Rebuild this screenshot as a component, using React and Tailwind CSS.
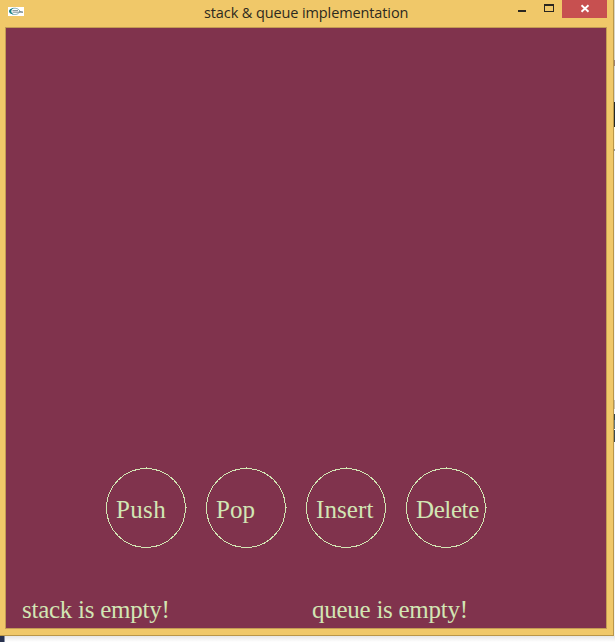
const circles = [
  { label: 'Push', spacing: 'tracking-[0.35px]', dot: true },
  { label: 'Pop', spacing: 'tracking-[0.1px]', dot: true },
  { label: 'Insert', spacing: 'tracking-[0.1px]', dot: false },
  { label: 'Delete', spacing: 'tracking-[-0.4px]', dot: true },
];

function AppIcon() {
  return (
    <svg width="16" height="9" viewBox="0 0 16 9" className="mt-[7px] ml-2 block shrink-0">
      <rect width="16" height="9" fill="#fff" />
      <path d="M4 1.600C7 .8 10.500 1.300 12 4.300 10.500 7.600 7 8 4 7" fill="none" stroke="#6fa3ac" strokeWidth=".9" />
      <path d="M5.500 1.200C2.300 1.300 1 2.800 1 4.300s1.200 2.800 4.500 3C3.900 6.400 3.300 5.500 3.300 4.300S3.900 2.100 5.500 1.200Z" fill="#168085" />
      <path d="M4.500 3.600h5.500M4.500 5.200h10.500M11 4.200l4 1" stroke="#71868f" strokeWidth=".9" fill="none" />
    </svg>
  );
}

function CircleButton({ label, spacing, dot }) {
  return (
    <div className="grid h-[82px] w-[82px] shrink-0">
      <svg width="82" height="82" viewBox="0 0 82 82" className="col-start-1 row-start-1" shapeRendering="crispEdges">
        <circle cx="40" cy="41" r="39.5" fill="none" stroke="#d2e6b4" strokeWidth="1" />
        <rect x="40" y="0" width="1" height="1" fill="#d2e6b4" />
        {dot && <rect x="80" y="40" width="1" height="1" fill="#d2e6b4" />}
      </svg>
      <span className={`col-start-1 row-start-1 mt-[28px] ml-[10px] whitespace-nowrap leading-[30px] ${spacing}`}>{label}</span>
    </div>
  );
}

export default function App() {
  return (
    <div className="flex h-[642px] w-[615px] flex-col overflow-hidden bg-white">
      <div className="flex h-[636px] shrink-0">
        <div className="flex w-[614px] shrink-0 flex-col border-r border-b border-[#b99648] bg-[#f0c869]">
          <header className="grid h-[27px] shrink-0 grid-cols-[204px_1fr_auto]">
            <AppIcon />
            <h1 className="whitespace-nowrap pt-[2px] font-['Open_Sans','Noto_Sans',sans-serif] text-[14.5px] leading-[22px] tracking-[-0.11px] text-[#2d2a20]">
              stack &amp; queue implementation
            </h1>
            <div className="mr-[6px] flex">
              <svg width="45" height="18" viewBox="0 0 45 18" shapeRendering="crispEdges">
                <path d="M1 10h8v2H1zM27 4h10v8H27zM28 6v5h8V6z" fill="#292620" fillRule="evenodd" />
              </svg>
              <div className="h-[18px] w-[45px] bg-[#c75050]">
                <svg width="45" height="18" viewBox="0 0 45 18">
                  <path d="m19.500 5.300 7 6.400m0-6.400-7 6.400" stroke="#fff" strokeWidth="1.900" />
                </svg>
              </div>
            </div>
          </header>
          <main className="ml-[5px] flex h-[602px] w-[602px] shrink-0 flex-col border border-[#c39b54] bg-[#80334d] font-['Liberation_Serif','Times_New_Roman',serif] text-[25px] text-[#d2e6b4]">
            <div className="mt-[439px] ml-[100px] flex gap-[18px]">
              {circles.map((circle) => (
                <CircleButton key={circle.label} {...circle} />
              ))}
            </div>
            <div className="mt-[46px] ml-4 flex leading-[30px] tracking-[-0.26px]">
              <span className="w-[290px]">stack is empty!</span>
              <span>queue is empty!</span>
            </div>
          </main>
        </div>
        <div className="flex w-px flex-col bg-[#f2f2f2]">
          <div className="h-[60px] bg-[#d8d5c7]" />
          <div className="h-[6px] bg-[#9d8374]" />
          <div className="h-[36px] bg-[#d7d8d6]" />
          <div className="h-[25px] bg-[#252a2a]" />
          <div className="h-[22px] bg-[#fff5d9]" />
          <div className="h-[2px] bg-[#9b9b9b]" />
          <div className="mt-[249px] h-[9px] bg-[#c5bfb1]" />
          <div className="mt-[5px] h-[6px] bg-[#35484e]" />
          <div className="h-[9px] bg-[#64777d]" />
          <div className="mt-px h-[12px] bg-[#3e4d53]" />
        </div>
      </div>
      <div className="flex h-[6px]">
        <div className="w-[5px] border-r border-[#8790a5] bg-[#29324e]" />
        <div className="flex-1 bg-linear-to-b from-[#e7e7e7] to-white" />
      </div>
    </div>
  );
}
